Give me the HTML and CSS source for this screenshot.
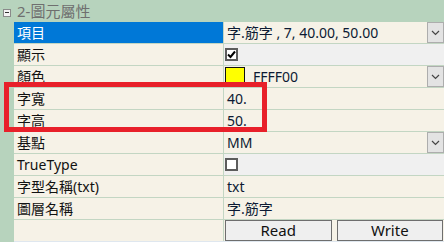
FILE: index.html
```html
<!DOCTYPE html>
<html>
<head>
<meta charset="utf-8">
<link rel="stylesheet" href="styles.css">
</head>
<body>
<div class="grid">
  <div class="header">
    <span class="toggle"><span class="minus"></span></span>
    <span class="title">2-圖元屬性</span>
  </div>
  <div class="row">
    <div class="name sel">項目</div>
    <div class="value"><span class="txt">字.筋字 , 7, 40.00, 50.00</span><span class="drop"><svg width="9" height="6" viewBox="0 0 9 6"><path d="M1 1 L4.5 4.5 L8 1" fill="none" stroke="#444" stroke-width="1.2"/></svg></span></div>
  </div>
  <div class="row">
    <div class="name">顯示</div>
    <div class="value gray"><span class="check on"><svg width="9" height="9" viewBox="0 0 9 9"><path d="M1 4.5 L3.5 7 L8 1.5" fill="none" stroke="#000" stroke-width="2"/></svg></span></div>
  </div>
  <div class="row">
    <div class="name">顏色</div>
    <div class="value"><span class="swatch"></span><span class="txt hex">FFFF00</span><span class="drop"><svg width="9" height="6" viewBox="0 0 9 6"><path d="M1 1 L4.5 4.5 L8 1" fill="none" stroke="#444" stroke-width="1.2"/></svg></span></div>
  </div>
  <div class="row">
    <div class="name">字寬</div>
    <div class="value"><span class="txt">40.</span></div>
  </div>
  <div class="row">
    <div class="name">字高</div>
    <div class="value"><span class="txt">50.</span></div>
  </div>
  <div class="row">
    <div class="name">基點</div>
    <div class="value"><span class="txt">MM</span><span class="drop"><svg width="9" height="6" viewBox="0 0 9 6"><path d="M1 1 L4.5 4.5 L8 1" fill="none" stroke="#444" stroke-width="1.2"/></svg></span></div>
  </div>
  <div class="row">
    <div class="name">TrueType</div>
    <div class="value gray"><span class="check"></span></div>
  </div>
  <div class="row">
    <div class="name">字型名稱(txt)</div>
    <div class="value"><span class="txt">txt</span></div>
  </div>
  <div class="row">
    <div class="name">圖層名稱</div>
    <div class="value"><span class="txt">字.筋字</span></div>
  </div>
  <div class="row last">
    <div class="name"></div>
    <div class="value buttons"><button class="btn">Read</button><button class="btn">Write</button></div>
  </div>
  <div class="highlight"></div>
</div>
</body>
</html>
```
FILE: styles.css
```css
* { box-sizing: border-box; }
html, body { margin: 0; padding: 0; }
body {
  width: 444px;
  height: 242px;
  overflow: hidden;
  font-family: "Noto Sans", "Noto Sans CJK TC", sans-serif;
  font-size: 14px;
  background: #b7d3bd;
}
.grid {
  position: relative;
  width: 444px;
  height: 242px;
  display: flex;
  flex-direction: column;
  background: #b7d3bd;
  padding-left: 14px;
}
.header {
  height: 22px;
  margin-left: -14px;
  display: flex;
  align-items: center;
  padding-left: 3px;
}
.toggle {
  width: 8px;
  height: 8px;
  border: 1px solid #8a8a8a;
  background: #f4f4f4;
  display: flex;
  align-items: center;
  justify-content: center;
  margin-top: 3px;
}
.minus { width: 4px; height: 1px; background: #333; }
.title {
  margin-left: 6px;
  color: #6f6f6f;
  font-size: 15px;
  line-height: 22px;
}
.row {
  display: flex;
  height: 22px;
  border-bottom: 1px solid #c3d6c3;
  background: #c3d6c3;
}
.name {
  width: 209px;
  background: #f6f2e7;
  padding-left: 3px;
  line-height: 21px;
  color: #111;
  white-space: nowrap;
}
.name.sel { background: #0078d7; color: #fff; }
.value {
  flex: 1;
  margin-left: 1px;
  background: #f6f2e7;
  display: flex;
  align-items: center;
  padding-left: 3px;
  color: #0c1a33;
  position: relative;
}
.value.gray { background: #f0f0f0; padding-left: 1px; }
.txt { line-height: 21px; white-space: nowrap; }
.hex { margin-left: 8px; }
.drop {
  position: absolute;
  right: 0;
  top: 0;
  width: 17px;
  height: 21px;
  background: #e3e3e3;
  border: 1px solid #adadad;
  display: flex;
  align-items: center;
  justify-content: center;
}
.check {
  width: 13px;
  height: 13px;
  border: 2px solid #5c5c5c;
  background: #fff;
  display: flex;
  align-items: center;
  justify-content: center;
}
.swatch {
  width: 20px;
  height: 19px;
  background: #ffff00;
  border: 1px solid #111;
  margin-left: -2px;
}
.row.last { border-bottom: 1px solid #dfe7ef; }
.buttons { padding-left: 1px; gap: 5px; align-items: stretch; padding-right: 1px; }
.btn {
  flex: 1;
  margin: 0;
  padding: 0;
  font-family: "Noto Sans", sans-serif;
  font-size: 15px;
  color: #111;
  background: #efefef;
  border: 1px solid #6e6e6e;
  border-radius: 0;
  line-height: 19px;
}
.highlight {
  position: absolute;
  left: 4px;
  top: 82px;
  width: 263px;
  height: 50px;
  border: 5px solid #e8202a;
}
```
